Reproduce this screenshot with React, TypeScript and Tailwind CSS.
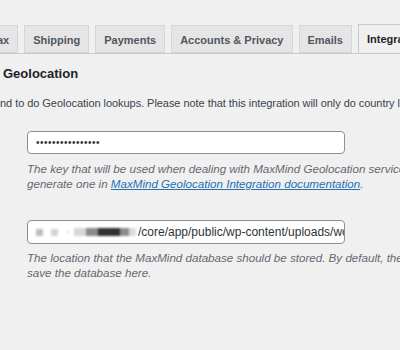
const tabs = ["Shipping", "Payments", "Accounts & Privacy", "Emails"];

function Tab({ label, active }: { label: string; active?: boolean }) {
  if (active) {
    return (
      <div className="h-[29px] shrink-0 border border-b-0 border-[#c9c9cb] bg-[#f0f0f1] px-[8px] pt-[6px] text-[11px] font-bold text-[#1d2327]">
        {label}
      </div>
    );
  }
  return (
    <div className="h-[28px] shrink-0 border border-[#d6d6d8] bg-[#e5e5e6] px-[8px] pt-[6px] text-[11px] font-bold text-[#50575e]">
      {label}
    </div>
  );
}

export default function App() {
  return (
    <div
      className="h-[350px] w-[400px] overflow-hidden bg-[#f0f0f1] text-[#3c434a]"
      style={{ fontFamily: '"Liberation Sans", Arial, sans-serif' }}
    >
      <div className="pt-[24px]">
        <div className="flex items-end gap-[6px] whitespace-nowrap border-b border-[#c9c9cb]">
          <div className="-ml-[18px]">
            <Tab label="Tax" />
          </div>
          {tabs.map((t) => (
            <Tab key={t} label={t} />
          ))}
          <Tab label="Integration" active />
        </div>
      </div>

      <h2 className="mt-[11px] pl-[3px] text-[13px] font-bold leading-[18px] text-[#1d2327]">
        Geolocation
      </h2>

      <p className="mt-[13px] whitespace-nowrap text-[11px] leading-[15px] tracking-[-0.05px] text-[#3c434a]">
        nd to do Geolocation lookups. Please note that this integration will only do country lookups.
      </p>

      <div className="ml-[27px] mt-[20px]">
        <div className="flex h-[23px] w-[318px] items-center rounded-[4px] border border-[#8c8f94] bg-white pl-[8px] text-[10px] tracking-[0.5px] text-[#2c3338]">
          ••••••••••••••••
        </div>
        <p className="mt-[7px] whitespace-nowrap text-[11.6px] italic leading-[15px] text-[#646970]">
          The key that will be used when dealing with MaxMind Geolocation services. You can read how to
        </p>
        <p className="whitespace-nowrap text-[11.6px] italic leading-[15px] text-[#646970]">
          generate one in{" "}
          <a href="#" className="text-[#2271b1] underline">
            MaxMind Geolocation Integration documentation
          </a>
          .
        </p>

        <div className="mt-[29px] flex h-[24px] w-[318px] items-center overflow-hidden whitespace-nowrap rounded-[4px] border border-[#8c8f94] bg-white pl-[8px] text-[12px] text-[#2c3338]">
          <div className="flex items-center blur-[1px]">
            <span className="h-[7px] w-[7px] bg-[#bdbdbd]" />
            <span className="ml-[8px] h-[7px] w-[7px] bg-[#d4d4d4]" />
            <span className="ml-[9px] h-[2px] w-[2px] bg-[#cfcfcf]" />
            <span className="ml-[5px] h-[8px] w-[12px] bg-[#d8d8d8]" />
            <span className="h-[8px] w-[12px] bg-[#8a8a8a]" />
            <span className="h-[8px] w-[22px] bg-[#2f3235]" />
            <span className="h-[8px] w-[9px] bg-[#8c8c8c]" />
            <span className="h-[8px] w-[7px] bg-[#dcdcdc]" />
          </div>
          <span className="ml-[2px]">/core/app/public/wp-content/uploads/woocommerce_uploads</span>
        </div>
        <p className="mt-[6px] whitespace-nowrap text-[11.6px] italic leading-[15px] text-[#646970]">
          The location that the MaxMind database should be stored. By default, the integration will
        </p>
        <p className="whitespace-nowrap text-[11.6px] italic leading-[15px] text-[#646970]">
          save the database here.
        </p>
      </div>
    </div>
  );
}
